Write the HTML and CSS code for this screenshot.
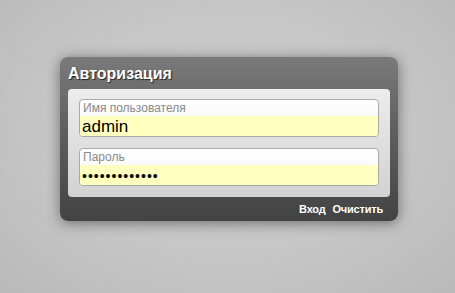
FILE: index.html
```html
<!DOCTYPE html>
<html lang="ru">

<head>
    <meta charset="UTF-8">
    <title>Авторизация</title>
    <link rel="stylesheet" href="styles.css">
</head>

<body>
    <div class="login">
        <div class="login-title">Авторизация</div>
        <form class="login-panel">
            <label class="field">
                <span class="field-label">Имя пользователя</span>
                <input class="field-input" type="text" value="admin">
            </label>
            <label class="field">
                <span class="field-label">Пароль</span>
                <input class="field-input pass" type="password" value="1234567890123">
            </label>
        </form>
        <div class="login-footer">
            <a href="#">Вход</a>
            <a href="#">Очистить</a>
        </div>
    </div>
</body>

</html>
```

FILE: styles.css
```css
html,
body {
    margin: 0;
    height: 100%;
}

body {
    background: radial-gradient(ellipse at 50% 45%, #cdcdcd 0%, #c6c6c6 55%, #b9b9b9 100%);
    font-family: "Liberation Sans", Arial, sans-serif;
    padding: 57px 0 0 60px;
    box-sizing: border-box;
    overflow: hidden;
}

.login {
    width: 338px;
    height: 164px;
    box-sizing: border-box;
    padding: 0 8px;
    border-radius: 8px;
    background: linear-gradient(#7a7a7a, #5c5c5c 50%, #434343);
    box-shadow: 0 2px 14px rgba(0, 0, 0, 0.45);
    display: flex;
    flex-direction: column;
}

.login-title {
    height: 32px;
    line-height: 33px;
    padding-left: 0;
    color: #fff;
    font-size: 16px;
    font-weight: bold;
    text-shadow: 1px 1px 1px #222;
}

.login-panel {
    margin: 0;
    height: 108px;
    box-sizing: border-box;
    padding: 10px 11px 0;
    border-radius: 4px;
    background: linear-gradient(#ececec, #d2d2d2);
    display: flex;
    flex-direction: column;
    gap: 11px;
}

.field {
    display: flex;
    flex-direction: column;
    height: 38px;
    box-sizing: border-box;
    border: 1px solid #a9a9a9;
    border-radius: 4px;
    background: linear-gradient(#fff, #f4f4f4);
    overflow: hidden;
}

.field-label {
    height: 16px;
    line-height: 17px;
    padding-left: 3px;
    font-size: 12px;
    color: #8a8a8a;
}

.field-input {
    height: 20px;
    border: 0;
    margin: 0;
    padding: 1px 2px 0;
    box-sizing: border-box;
    background: #ffffc0;
    font-family: "Liberation Sans", Arial, sans-serif;
    font-size: 17px;
    color: #000;
    outline: none;
}

.field-input.pass {
    font-size: 14px;
    letter-spacing: 1px;
}

.login-footer {
    flex: 1;
    display: flex;
    justify-content: flex-end;
    align-items: center;
    gap: 7px;
    padding-right: 7px;
}

.login-footer a {
    color: #fff;
    text-decoration: none;
    font-size: 11px;
    font-weight: bold;
    letter-spacing: -0.2px;
}
```
